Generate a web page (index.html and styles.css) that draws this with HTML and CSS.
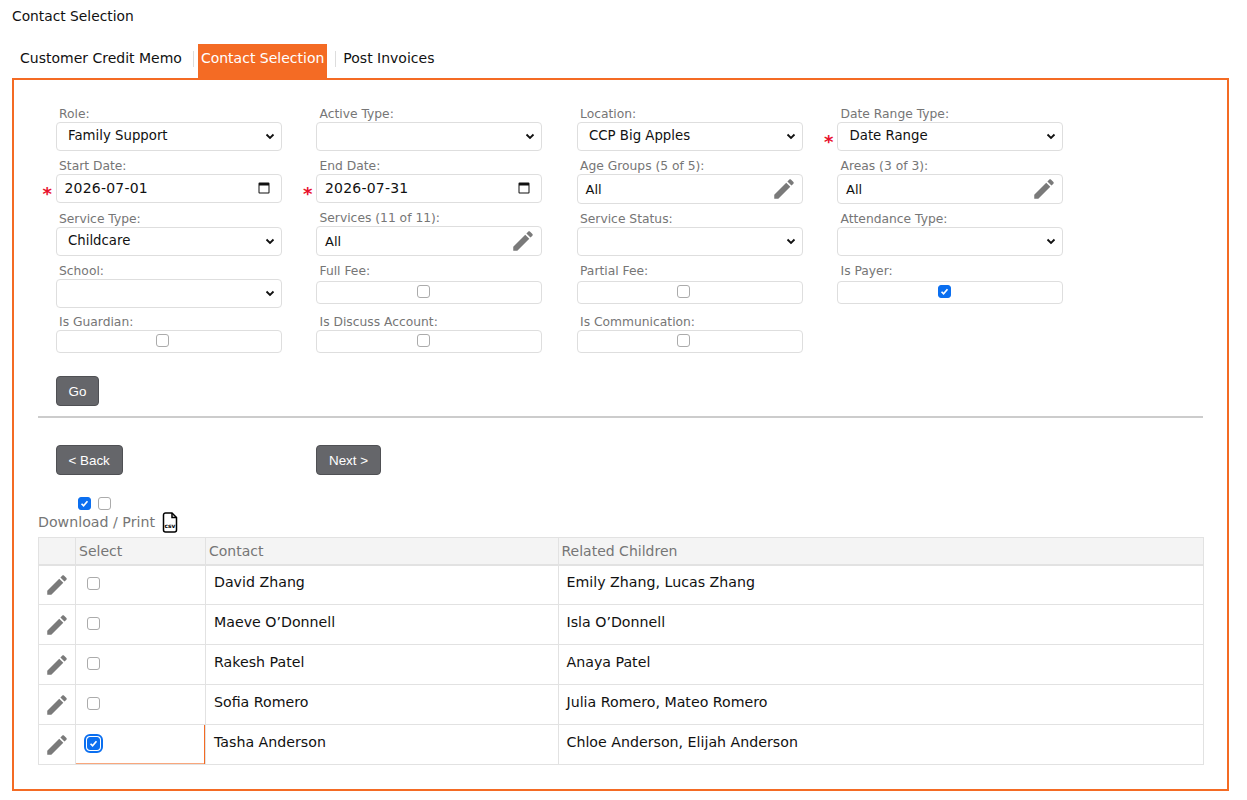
FILE: index.html
```html
<!DOCTYPE html>
<html lang="en">
<head>
    <title>Contact Selection</title>
    <meta charset="UTF-8">
    <link rel="stylesheet" href="styles.css">
</head>
<body>
    <svg class="defs" width="0" height="0">
        <symbol id="pencil" viewBox="0 0 24 24">
            <path d="M3 17.25V21h3.75L17.81 9.94l-3.75-3.75L3 17.25zM20.71 7.04c.39-.39.39-1.02 0-1.41l-2.34-2.34c-.39-.39-1.02-.39-1.41 0l-1.83 1.83 3.75 3.75 1.83-1.83z"/>
        </symbol>
        <symbol id="calendar" viewBox="0 0 12 12">
            <path d="M1.5 0.5h9a1 1 0 0 1 1 1v9a1 1 0 0 1-1 1h-9a1 1 0 0 1-1-1v-9a1 1 0 0 1 1-1zM1.5 3.5v7h9v-7z" fill-rule="evenodd"/>
        </symbol>
    </svg>

    <div class="page-title">Contact Selection</div>

    <div class="tabs">
        <a class="tab">Customer Credit Memo</a>
        <span class="sep"></span>
        <a class="tab active">Contact Selection</a>
        <span class="sep"></span>
        <a class="tab">Post Invoices</a>
    </div>

    <div class="panel">
        <div class="form-grid">
            <div class="field">
                <label>Role:</label>
                <select class="control"><option>Family Support</option></select>
            </div>
            <div class="field">
                <label>Active Type:</label>
                <select class="control"><option></option></select>
            </div>
            <div class="field">
                <label>Location:</label>
                <select class="control"><option>CCP Big Apples</option></select>
            </div>
            <div class="field required">
                <label>Date Range Type:</label>
                <select class="control"><option>Date Range</option></select>
            </div>

            <div class="field required">
                <label>Start Date:</label>
                <div class="control date">2026-07-01 <svg class="cal"><use href="#calendar"/></svg></div>
            </div>
            <div class="field required">
                <label>End Date:</label>
                <div class="control date">2026-07-31 <svg class="cal"><use href="#calendar"/></svg></div>
            </div>
            <div class="field">
                <label>Age Groups (5 of 5):</label>
                <div class="control picker">All <svg class="pencil"><use href="#pencil"/></svg></div>
            </div>
            <div class="field">
                <label>Areas (3 of 3):</label>
                <div class="control picker">All <svg class="pencil"><use href="#pencil"/></svg></div>
            </div>

            <div class="field">
                <label>Service Type:</label>
                <select class="control"><option>Childcare</option></select>
            </div>
            <div class="field raised">
                <label>Services (11 of 11):</label>
                <div class="control picker">All <svg class="pencil"><use href="#pencil"/></svg></div>
            </div>
            <div class="field">
                <label>Service Status:</label>
                <select class="control"><option></option></select>
            </div>
            <div class="field">
                <label>Attendance Type:</label>
                <select class="control"><option></option></select>
            </div>

            <div class="field">
                <label>School:</label>
                <select class="control"><option></option></select>
            </div>
            <div class="field">
                <label>Full Fee:</label>
                <div class="check-box lower"><input type="checkbox"></div>
            </div>
            <div class="field">
                <label>Partial Fee:</label>
                <div class="check-box lower"><input type="checkbox"></div>
            </div>
            <div class="field">
                <label>Is Payer:</label>
                <div class="check-box lower"><input type="checkbox" checked></div>
            </div>

            <div class="field">
                <label>Is Guardian:</label>
                <div class="check-box"><input type="checkbox"></div>
            </div>
            <div class="field">
                <label>Is Discuss Account:</label>
                <div class="check-box"><input type="checkbox"></div>
            </div>
            <div class="field">
                <label>Is Communication:</label>
                <div class="check-box"><input type="checkbox"></div>
            </div>
        </div>

        <button class="btn go">Go</button>
        <hr class="divider">

        <div class="nav-buttons">
            <div class="nav-cell"><button class="btn">&lt; Back</button></div>
            <div class="nav-cell"><button class="btn">Next &gt;</button></div>
        </div>

        <div class="table-tools">
            <input type="checkbox" checked>
            <input type="checkbox">
        </div>
        <div class="download">
            Download / Print
            <svg class="csv" viewBox="0 0 16 21">
                <path d="M1.5 3a2 2 0 0 1 2-2H10l4.5 4.5V18a2 2 0 0 1-2 2h-9a2 2 0 0 1-2-2z" fill="#fff" stroke="#000" stroke-width="1.5"/>
                <path d="M10 1v4.5h4.5" fill="none" stroke="#000" stroke-width="1.5"/>
                <text x="8" y="15.5" text-anchor="middle">csv</text>
            </svg>
        </div>

        <table class="contacts">
            <colgroup>
                <col class="col-edit">
                <col class="col-select">
                <col class="col-contact">
                <col>
            </colgroup>
            <thead>
                <tr><th></th><th>Select</th><th>Contact</th><th>Related Children</th></tr>
            </thead>
            <tbody>
                <tr>
                    <td class="edit"><svg class="pencil"><use href="#pencil"/></svg></td>
                    <td class="sel"><input type="checkbox"></td>
                    <td>David Zhang</td>
                    <td>Emily Zhang, Lucas Zhang</td>
                </tr>
                <tr>
                    <td class="edit"><svg class="pencil"><use href="#pencil"/></svg></td>
                    <td class="sel"><input type="checkbox"></td>
                    <td>Maeve O’Donnell</td>
                    <td>Isla O’Donnell</td>
                </tr>
                <tr>
                    <td class="edit"><svg class="pencil"><use href="#pencil"/></svg></td>
                    <td class="sel"><input type="checkbox"></td>
                    <td>Rakesh Patel</td>
                    <td>Anaya Patel</td>
                </tr>
                <tr>
                    <td class="edit"><svg class="pencil"><use href="#pencil"/></svg></td>
                    <td class="sel"><input type="checkbox"></td>
                    <td>Sofia Romero</td>
                    <td>Julia Romero, Mateo Romero</td>
                </tr>
                <tr>
                    <td class="edit"><svg class="pencil"><use href="#pencil"/></svg></td>
                    <td class="sel focused"><input type="checkbox" checked></td>
                    <td>Tasha Anderson</td>
                    <td>Chloe Anderson, Elijah Anderson</td>
                </tr>
            </tbody>
        </table>
    </div>
</body>
</html>
```

FILE: styles.css
```css
:root{
    --orange: #f46b24;
    --label: #767676;
    --line: #e2e2e2;
    --text: #111111;
    --btn: #65666a;
    --blue: #0b6ff0;
}

html, body{
    margin: 0;
    padding: 0;
    background-color: #ffffff;
    color: var(--text);
    font-family: "DejaVu Sans", sans-serif;
    font-size: 14px;
}

body{
    padding: 0 18px 9px 12px;
}

.defs{
    display: block;
    height: 0;
}

.page-title{
    height: 44px;
    padding-top: 8px;
    box-sizing: border-box;
    font-size: 13.8px;
    line-height: 16px;
}

.tabs{
    display: flex;
    align-items: stretch;
    height: 34px;
    padding-left: 8px;
}

.tab{
    line-height: 28px;
    white-space: nowrap;
}

.tab.active{
    background-color: var(--orange);
    color: #ffffff;
    padding: 0 3px 0 3px;
}

.sep{
    width: 1px;
    height: 16px;
    margin: 7px 4px 0 11px;
    background-color: #dddddd;
}

.tab.active + .sep{
    margin: 7px 7px 0 8px;
}

.panel{
    border: 2px solid var(--orange);
    padding: 25px 24px 24px 24px;
    height: 713px;
    box-sizing: border-box;
}

.form-grid{
    display: grid;
    grid-template-columns: repeat(4, 226px);
    grid-template-rows: 52px 53px 52px 51px 40px;
    column-gap: 34.5px;
    margin-left: 17.5px;
}

.field{
    position: relative;
    display: flex;
    flex-direction: column;
    align-items: stretch;
}

.field label{
    height: 17px;
    padding-left: 3.5px;
    font-size: 12.3px;
    line-height: 18px;
    color: var(--label);
}

.field.raised{
    margin-top: -1px;
}

.field.required::before{
    content: "*";
    position: absolute;
    left: -13px;
    top: 25px;
    color: #e8112d;
    font-size: 18px;
    font-weight: bold;
    line-height: 24px;
}

.control{
    box-sizing: border-box;
    height: 29px;
    width: 100%;
    margin: 0;
    border: 1px solid #dedede;
    border-radius: 4px;
    background-color: #ffffff;
    color: var(--text);
    font-family: "DejaVu Sans", sans-serif;
    font-size: 14px;
}

select.control{
    appearance: none;
    padding: 0 0 3px 11.5px;
    font-size: 13.3px;
    background-image: url("data:image/svg+xml,%3Csvg xmlns='http://www.w3.org/2000/svg' width='10' height='7'%3E%3Cpath d='M1.5 1.5 5 5l3.5-3.5' fill='none' stroke='%23111' stroke-width='1.8'/%3E%3C/svg%3E");
    background-repeat: no-repeat;
    background-position: right 6px center;
}

.date{
    display: flex;
    align-items: center;
    justify-content: space-between;
    padding: 0 11px 2px 8px;
    letter-spacing: 0.2px;
}

.cal{
    width: 12px;
    height: 12px;
    fill: #111111;
}

.picker{
    display: flex;
    align-items: center;
    justify-content: space-between;
    height: 30px;
    padding: 0 5px 0 8px;
    font-size: 13px;
}

.pencil{
    width: 26px;
    height: 26px;
    fill: #7a7a7a;
}

.check-box{
    display: flex;
    align-items: center;
    justify-content: center;
    box-sizing: border-box;
    height: 23px;
    padding: 0 12px 3px 0;
    border: 1px solid #dedede;
    border-radius: 4px;
}

.check-box.lower{
    margin-top: 2px;
    padding-bottom: 2px;
}

input[type="checkbox"]{
    appearance: none;
    box-sizing: border-box;
    width: 13px;
    height: 13px;
    margin: 0;
    border: 1px solid #ababab;
    border-radius: 3px;
    background-color: #ffffff;
}

input[type="checkbox"]:checked{
    border-color: var(--blue);
    background-color: var(--blue);
    background-image: url("data:image/svg+xml,%3Csvg xmlns='http://www.w3.org/2000/svg' viewBox='0 0 13 13'%3E%3Cpath d='M3 6.8 5.4 9.2 10 3.9' fill='none' stroke='%23fff' stroke-width='2'/%3E%3C/svg%3E");
    background-position: center;
    background-repeat: no-repeat;
}

.btn{
    height: 30px;
    padding: 0 12px;
    border: 1px solid #4f5054;
    border-radius: 4px;
    background-color: var(--btn);
    color: #ffffff;
    font-family: "Liberation Sans", sans-serif;
    font-size: 13.4px;
}

.go{
    display: block;
    margin: 23px 0 0 17.5px;
}

.divider{
    height: 2px;
    margin: 10px 0 0 0;
    border: 0;
    background-color: #cccccc;
}

.nav-buttons{
    display: flex;
    margin: 27px 0 0 17.5px;
}

.nav-cell{
    width: 260.5px;
}

.table-tools{
    display: flex;
    gap: 7px;
    height: 13px;
    margin: 22px 0 0 40px;
}

.download{
    display: flex;
    align-items: center;
    gap: 7px;
    height: 24px;
    color: var(--label);
    font-size: 14.2px;
}

.csv{
    width: 16px;
    height: 21px;
}

.csv text{
    font-family: "DejaVu Sans", sans-serif;
    font-size: 6px;
    font-weight: bold;
    fill: #000000;
}

.contacts{
    width: 1166px;
    margin-top: 3px;
    border-collapse: collapse;
    table-layout: fixed;
    border: 1px solid var(--line);
    font-size: 14.2px;
}

.col-edit{
    width: 37px;
}

.col-select{
    width: 130px;
}

.col-contact{
    width: 352.5px;
}

.contacts th{
    box-sizing: border-box;
    height: 27px;
    padding: 0 3px;
    border: 1px solid var(--line);
    border-bottom-width: 2px;
    background-color: #f4f4f4;
    color: var(--label);
    font-size: 14px;
    font-weight: normal;
    text-align: left;
}

.contacts td{
    box-sizing: border-box;
    height: 40px;
    padding: 0 7px 6px 8px;
    border: 1px solid var(--line);
}

.contacts td.edit{
    padding: 0;
    text-align: center;
}

.contacts td.sel{
    padding: 0 0 2px 11px;
}

.contacts td.sel input{
    display: block;
}

.contacts td.edit .pencil{
    display: block;
    margin: 0 auto;
}

.contacts td.focused{
    box-shadow: inset -1px 0 0 var(--orange), inset 0 -1px 0 #f9a77c;
}

.focused input[type="checkbox"]{
    outline: 2px solid var(--blue);
    outline-offset: 1px;
}
```
